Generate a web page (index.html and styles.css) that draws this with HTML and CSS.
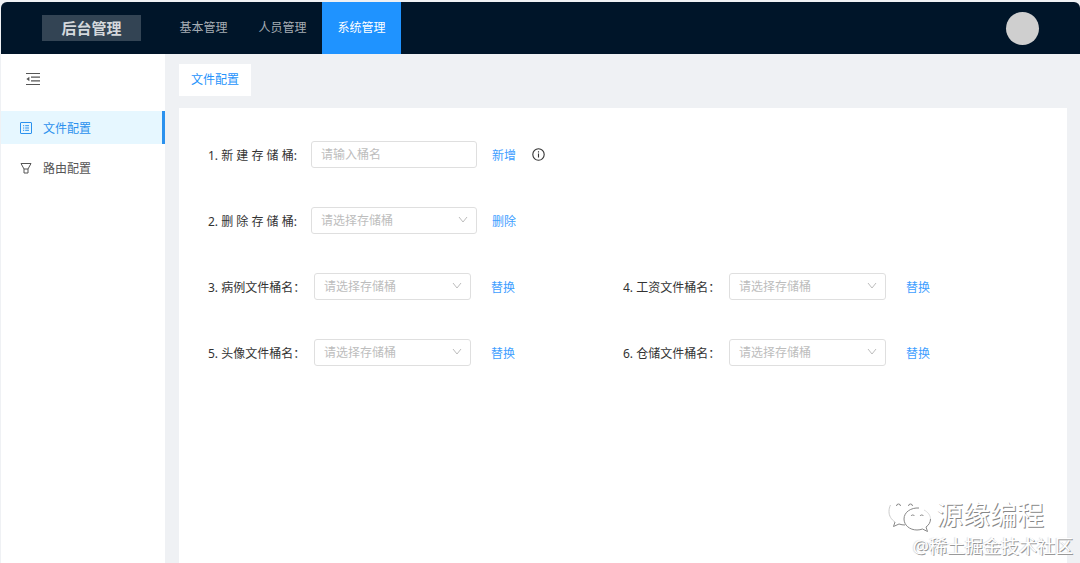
FILE: index.html
```html
<!DOCTYPE html>
<html lang="zh-CN">
<head>
    <meta charset="UTF-8">
    <meta name="viewport" content="width=device-width, initial-scale=1.0">
    <title>后台管理</title>
    <link rel="stylesheet" href="styles.css">
</head>
<body>
    <div class="app">
        <header class="header">
            <h1 class="logo">后台管理</h1>
            <nav class="top-nav">
                <a href="#">基本管理</a>
                <a href="#">人员管理</a>
                <a href="#" class="active">系统管理</a>
            </nav>
            <button class="avatar" aria-label="用户"></button>
        </header>
        <div class="body">
            <aside class="sidebar">
                <button class="fold" aria-label="收起菜单">
                    <svg width="14" height="14" viewBox="0 0 14 14" fill="none" stroke="#555" stroke-width="1.2">
                        <path d="M0 1.5h14M5 5.2h9M5 8.8h9M0 12.5h14"/>
                        <path d="M0.4 7L3.4 4.8v4.4z" fill="#555" stroke="none"/>
                    </svg>
                </button>
                <nav class="side-nav">
                    <a href="#" class="active">
                        <svg width="12" height="12" viewBox="0 0 12 12" fill="none" stroke="currentColor">
                            <rect x="0.5" y="0.5" width="11" height="11" rx="0.5"/>
                            <path d="M3 3.7h1.2M5.2 3.7H9M3 6h1.2M5.2 6H9M3 8.3h1.2M5.2 8.3H9"/>
                        </svg>
                        文件配置
                    </a>
                    <a href="#">
                        <svg width="12" height="12" viewBox="0 0 12 12" fill="none" stroke="currentColor" stroke-linejoin="round">
                            <path d="M1 1.500h10L8 7H4zM4 7v4h4V7"/>
                        </svg>
                        路由配置
                    </a>
                </nav>
            </aside>
            <main class="main">
                <div class="tabs">
                    <a href="#" class="tab">文件配置</a>
                </div>
                <form class="panel">
                    <div class="row wide">
                        <label for="newBucket">1. 新 建 存 储 桶:</label>
                        <input type="text" id="newBucket" class="field" placeholder="请输入桶名">
                        <button type="button" class="link">新增</button>
                        <svg class="info" width="13" height="13" viewBox="0 0 13 13" fill="none" stroke="#333">
                            <circle cx="6.5" cy="6.5" r="5.7" stroke-width="1.1"/>
                            <path d="M6.5 5.6v4M6.5 3.2v1.3" stroke-width="1.1"/>
                        </svg>
                    </div>
                    <div class="row wide">
                        <label for="delBucket">2. 删 除 存 储 桶:</label>
                        <div class="select">
                            <select id="delBucket" class="field"><option>请选择存储桶</option></select>
                            <svg width="10" height="8" viewBox="0 0 10 8"><path d="M1 1l4 5 4-5"/></svg>
                        </div>
                        <button type="button" class="link">删除</button>
                    </div>
                    <div class="row">
                        <label for="caseBucket">3. 病例文件桶名：</label>
                        <div class="select">
                            <select id="caseBucket" class="field"><option>请选择存储桶</option></select>
                            <svg width="10" height="8" viewBox="0 0 10 8"><path d="M1 1l4 5 4-5"/></svg>
                        </div>
                        <button type="button" class="link">替换</button>
                    </div>
                    <div class="row">
                        <label for="salaryBucket">4. 工资文件桶名：</label>
                        <div class="select">
                            <select id="salaryBucket" class="field"><option>请选择存储桶</option></select>
                            <svg width="10" height="8" viewBox="0 0 10 8"><path d="M1 1l4 5 4-5"/></svg>
                        </div>
                        <button type="button" class="link">替换</button>
                    </div>
                    <div class="row">
                        <label for="avatarBucket">5. 头像文件桶名：</label>
                        <div class="select">
                            <select id="avatarBucket" class="field"><option>请选择存储桶</option></select>
                            <svg width="10" height="8" viewBox="0 0 10 8"><path d="M1 1l4 5 4-5"/></svg>
                        </div>
                        <button type="button" class="link">替换</button>
                    </div>
                    <div class="row">
                        <label for="storeBucket">6. 仓储文件桶名：</label>
                        <div class="select">
                            <select id="storeBucket" class="field"><option>请选择存储桶</option></select>
                            <svg width="10" height="8" viewBox="0 0 10 8"><path d="M1 1l4 5 4-5"/></svg>
                        </div>
                        <button type="button" class="link">替换</button>
                    </div>
                </form>
            </main>
        </div>
    </div>
    <div class="watermark">
        <div class="brand">
            <svg width="44" height="36" viewBox="0 0 44 36" fill="#fff" stroke-width="1">
                <path stroke="#ccc" d="M2.500 8C1.500 10 1 12 1 14.500c0 4.500 2.300 8 6 10.500"/>
                <path stroke="#888" d="M7 25l-1.500 4.500L11 27c2 .7 4 1 6 1"/>
                <path stroke="#888" d="M31 11c-8-.5-15 4-15 11 0 6 5.500 11 13 11 2 0 4-.4 5.500-1l5 2.500-1.500-4.500c3-2 4.500-5 4.500-8"/>
                <path stroke="#ddd" d="M36 13c4 2 6.500 5.500 6.500 9"/>
                <path fill="none" stroke="#888" d="M8.500 9a2 2 0 0 1 4 0M20.500 9a2 2 0 0 1 4 0M23 19a2 2 0 0 1 3.500 0M32 19a2 2 0 0 1 3.500 0"/>
            </svg>
            <span>源缘编程</span>
        </div>
        <div class="community">@稀土掘金技术社区</div>
    </div>
</body>
</html>
```
FILE: styles.css
```css
* {
    box-sizing: border-box;
}
body {
    margin: 0;
    padding: 2px 0 0 1px;
    background: #eff1f4;
    font-family: "Noto Sans", "Noto Sans CJK SC", sans-serif;
    font-size: 12px;
    color: #333;
}
a {
    color: inherit;
    text-decoration: none;
}
button, input, select {
    font: inherit;
}
button {
    padding: 0;
    border: none;
    background: none;
    cursor: pointer;
}
.app {
    display: flex;
    flex-direction: column;
    min-height: calc(100vh - 2px);
}
.header {
    display: flex;
    align-items: center;
    height: 52px;
    padding: 0 41px;
    background: #001529;
    border-radius: 6px 6px 0 0;
}
.logo {
    width: 99px;
    margin: 0 23px 0 0;
    background: #334454;
    color: #d4d8dc;
    font-size: 15px;
    line-height: 26px;
    text-align: center;
}
.top-nav {
    display: flex;
    flex: 1;
}
.top-nav a {
    width: 79px;
    line-height: 52px;
    color: #a6adb4;
    text-align: center;
}
.top-nav .active {
    background: #1f93ff;
    color: #fff;
}
.avatar {
    width: 33px;
    height: 33px;
    border-radius: 50%;
    background: #cfcfcf;
}
.body {
    display: flex;
    flex: 1;
}
.sidebar {
    width: 164px;
    background: #fff;
}
.fold {
    display: flex;
    margin: 18px 0 25px 25px;
}
.side-nav {
    display: flex;
    flex-direction: column;
    gap: 7px;
}
.side-nav a {
    display: flex;
    align-items: center;
    gap: 11px;
    height: 33px;
    padding-left: 19px;
    color: #555;
}
.side-nav .active {
    background: #e6f7ff;
    border-right: 3px solid #2b91ee;
    color: #2b91ee;
}
.main {
    display: flex;
    flex: 1;
    flex-direction: column;
    gap: 12px;
    padding: 10px 13px 0 14px;
}
.tabs {
    display: flex;
}
.tab {
    padding: 0 12px;
    background: #fff;
    color: #2593fc;
    line-height: 32px;
}
.panel {
    display: grid;
    grid-template-columns: 1fr 1fr;
    align-content: start;
    gap: 39px 0;
    flex: 1;
    padding: 33px 29px;
    background: #fff;
}
.row {
    display: flex;
    align-items: center;
    height: 27px;
}
.row label {
    width: 106px;
    white-space: nowrap;
}
.wide {
    grid-column: 1 / -1;
}
.wide label {
    width: 103px;
}
.field {
    display: block;
    width: 157px;
    height: 27px;
    padding: 0 9px;
    border: 1px solid #dfdfdf;
    border-radius: 3px;
    background: #fff;
    color: #bdbdbd;
    appearance: none;
}
.wide .field {
    width: 166px;
}
.field::placeholder {
    color: #bdbdbd;
}
.select {
    position: relative;
}
.select svg {
    position: absolute;
    top: 9px;
    right: 9px;
    fill: none;
    stroke: #bdbdbd;
    pointer-events: none;
}
.link {
    margin-left: 20px;
    color: #409eff;
}
.wide .link {
    margin-left: 15px;
}
.info {
    margin-left: 16px;
}
.watermark {
    position: absolute;
    right: 7px;
    bottom: 4px;
    display: flex;
    flex-direction: column;
    align-items: flex-end;
    color: #fff;
    pointer-events: none;
}
.brand {
    display: flex;
    align-items: center;
    gap: 4px;
    padding-right: 29px;
    font-size: 27px;
    line-height: 36px;
    text-shadow: 1px 1px 0 #888;
}
.community {
    font-size: 18px;
    line-height: 26px;
    text-shadow: 1px 1px 0 #999, -1px 0 1px #ddd;
}
```
